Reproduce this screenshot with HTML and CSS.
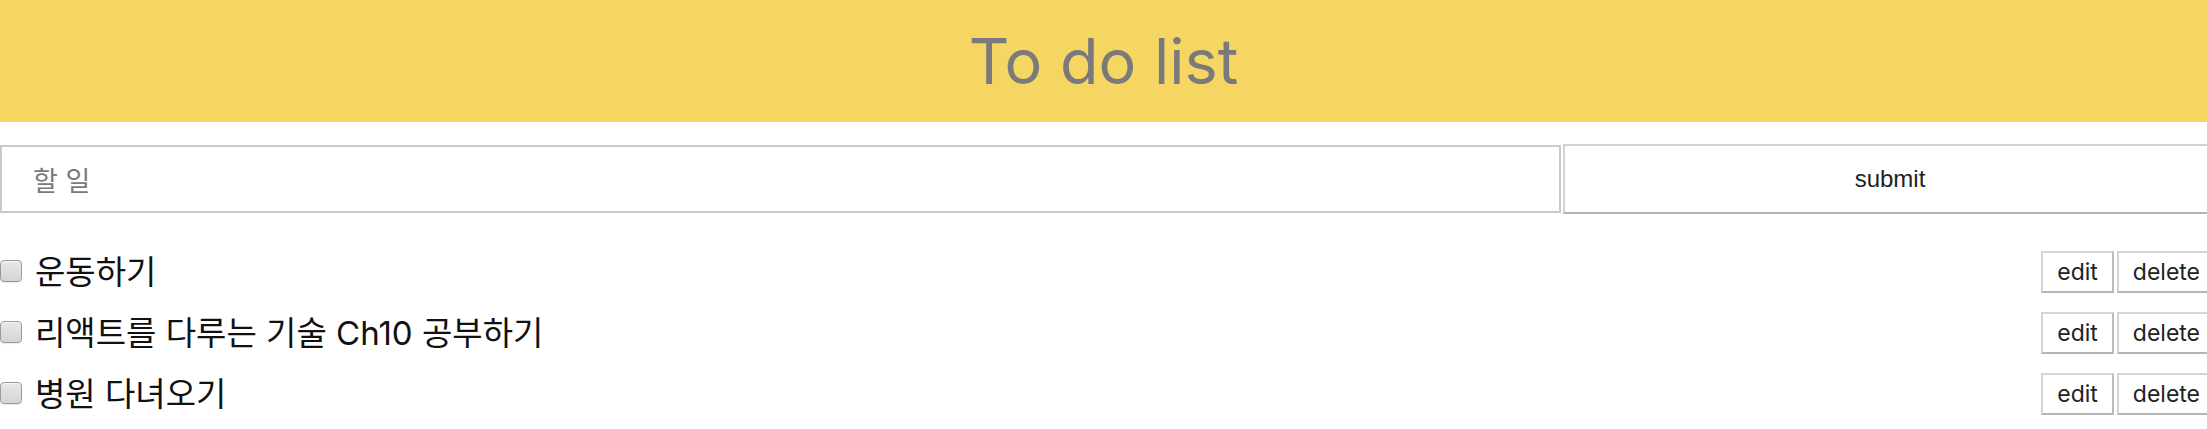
FILE: index.html
```html
<!DOCTYPE html>
<html lang="ko">
<head>
<meta charset="utf-8">
<title>To do list</title>
<link rel="stylesheet" href="styles.css">
</head>
<body>
<header class="header">
  <h1 class="title">To do list</h1>
</header>
<form class="form">
  <input class="input" type="text" placeholder="할 일">
  <button class="submit" type="button">submit</button>
</form>
<ul class="list">
  <li class="item">
    <label class="item-label"><input type="checkbox" class="check"><span class="item-text">운동하기</span></label>
    <div class="actions"><button class="btn" type="button">edit</button><button class="btn" type="button">delete</button></div>
  </li>
  <li class="item">
    <label class="item-label"><input type="checkbox" class="check"><span class="item-text">리액트를 다루는 기술 Ch10 공부하기</span></label>
    <div class="actions"><button class="btn" type="button">edit</button><button class="btn" type="button">delete</button></div>
  </li>
  <li class="item">
    <label class="item-label"><input type="checkbox" class="check"><span class="item-text">병원 다녀오기</span></label>
    <div class="actions"><button class="btn" type="button">edit</button><button class="btn" type="button">delete</button></div>
  </li>
</ul>
</body>
</html>
```

FILE: styles.css
```css
html, body {
  margin: 0;
  padding: 0;
  overflow-x: hidden;
  background: #ffffff;
}

body {
  font-family: Inter, "Noto Sans CJK KR", sans-serif;
  color: #111111;
}

.header {
  height: 122px;
  background: #f5d663;
  box-sizing: border-box;
  padding-top: 28px;
}

.title {
  margin: 0;
  text-align: center;
  font-size: 63px;
  line-height: 66px;
  font-weight: 400;
  color: #7a7a7a;
}

.form {
  display: flex;
  align-items: center;
  margin-top: 22px;
  width: calc(100% + 10px);
  height: 70px;
}

.input {
  flex: 0 0 1561px;
  height: 68px;
  box-sizing: border-box;
  margin: 0;
  padding: 0 0 0 31px;
  border: 2px solid #c9c9c9;
  font-family: "Noto Sans CJK KR", sans-serif;
  font-size: 27px;
  color: #222222;
  background: #ffffff;
  outline: none;
}

.input::placeholder {
  color: #7a7a7a;
}

.submit {
  flex: 1 1 auto;
  height: 70px;
  margin: 0 0 0 2px;
  box-sizing: border-box;
  background: #ffffff;
  border-style: solid;
  border-width: 2px;
  border-color: #d2d2d2 #b9b9b9 #b3b3b3 #d2d2d2;
  font-family: "Liberation Sans", Arial, sans-serif;
  font-size: 24px;
  color: #222222;
  padding: 0;
}

.list {
  list-style: none;
  margin: 37px 0 0 0;
  padding: 0;
  width: calc(100% + 9px);
  display: flex;
  flex-direction: column;
  gap: 19px;
}

.item {
  display: flex;
  align-items: center;
  justify-content: space-between;
  height: 42px;
}

.item-label {
  display: flex;
  align-items: center;
}

.check {
  appearance: none;
  -webkit-appearance: none;
  width: 22px;
  height: 22px;
  margin: -3px 0 0 0;
  box-sizing: border-box;
  border: 1px solid #9a9a9a;
  border-radius: 4px;
  background: linear-gradient(#e8e8e8, #d4d4d4);
  box-shadow: inset 0 1px 1px rgba(255, 255, 255, 0.7), 0 1px 1px rgba(0, 0, 0, 0.08);
}

.item-text {
  margin-left: 13px;
  font-size: 33px;
  line-height: 42px;
  color: #111111;
}

.actions {
  display: flex;
  gap: 3px;
}

.btn {
  height: 42px;
  box-sizing: border-box;
  margin: 0;
  padding: 0 14px;
  background: #ffffff;
  border-style: solid;
  border-width: 2px;
  border-color: #d4d4d4 #bdbdbd #b5b5b5 #d4d4d4;
  font-family: Inter, sans-serif;
  font-size: 23px;
  color: #222222;
}
```
